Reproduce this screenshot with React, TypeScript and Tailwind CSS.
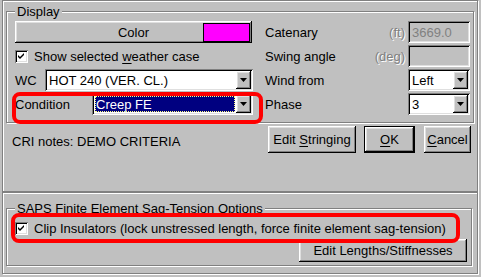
import React from "react";

const raised =
  "shadow-[inset_-1px_-1px_0_#000,inset_1px_1px_0_#fff,inset_-2px_-2px_0_#808080,inset_2px_2px_0_#dfdfdf]";
const sunken =
  "shadow-[inset_1px_1px_0_#808080,inset_-1px_-1px_0_#fff,inset_2px_2px_0_#000,inset_-2px_-2px_0_#dfdfdf]";
const etched = "border border-[#808080] shadow-[inset_1px_1px_0_#fff,1px_1px_0_#fff]";

function Check() {
  return (
    <div className={`w-[13px] h-[13px] shrink-0 bg-white ${sunken} flex items-center justify-center`}>
      <svg width="7" height="7" viewBox="0 0 7 7">
        <path d="M0 2 L2 4 L6 0 L6 2 L2 6 L0 4 Z" fill="#000" />
      </svg>
    </div>
  );
}

function Arrow() {
  return (
    <div className={`w-[15px] h-[18px] mr-[2px] shrink-0 bg-[#c0c0c0] ${raised} flex items-center justify-center`}>
      <svg width="7" height="4" viewBox="0 0 7 4">
        <path d="M0 0 H7 L3.5 4 Z" fill="#000" />
      </svg>
    </div>
  );
}

function Combo({ className, text, focus }: { className: string; text: string; focus?: boolean }) {
  return (
    <div className={`h-[22px] bg-white ${sunken} flex items-center ${className}`}>
      {focus ? (
        <div className="flex-1 h-[16px] ml-[3px] mr-[1px] bg-[#000080] text-white flex items-center pl-[1px] outline-1 outline-dotted outline-[#ffff80] -outline-offset-1">
          {text}
        </div>
      ) : (
        <div className="flex-1 pl-[4px]">{text}</div>
      )}
      <Arrow />
    </div>
  );
}

function Field({ text }: { text?: string }) {
  return (
    <div className={`w-[62px] h-[22px] ml-[3px] bg-[#c0c0c0] ${sunken} flex items-center pl-[4px] text-[#808080]`}>
      {text}
    </div>
  );
}

function Btn({ className, children }: { className: string; children: React.ReactNode }) {
  return (
    <div className={`bg-[#c0c0c0] ${raised} flex items-center justify-center ${className}`}>{children}</div>
  );
}

export default function App() {
  return (
    <div className="relative w-[481px] h-[277px] overflow-hidden bg-[#c0c0c0] pl-[2px] text-[13px] leading-[15px] text-black font-['Liberation_Sans',Arial,sans-serif]">
      {/* Frame A */}
      <div className={`w-[476px] h-[192px] ${etched} flex flex-col`}>
        {/* Display group */}
        <div className={`relative ml-[3px] mt-[10px] w-[468px] h-[112px] ${etched} pt-[9px] pl-[8px] flex`}>
          <span className="absolute left-[8px] top-[-8px] px-[2px] bg-[#c0c0c0]">Display</span>
          <div className="w-[238px] flex flex-col gap-[2px]">
            <Btn className="relative w-[237px] h-[22px]">
              <span>Color</span>
              <div className="absolute right-[2px] top-[2px] w-[47px] h-[19px] border border-[#000] bg-[#ff00ff]" />
            </Btn>
            <div className="h-[22px] flex items-center">
              <Check />
              <span className="ml-[6px]">
                Show selected <span className="underline underline-offset-[2px]">w</span>eather case
              </span>
            </div>
            <div className="h-[22px] flex items-center">
              <span>WC</span>
              <Combo className="ml-auto w-[208px]" text="HOT 240 (VER. CL.)" />
            </div>
            <div className="h-[22px] flex items-center">
              <span>Condition</span>
              <Combo className="ml-auto w-[161px]" text="Creep FE" focus />
            </div>
          </div>
          <div className="ml-[12px] w-[205px] flex flex-col gap-[2px]">
            <div className="h-[22px] flex items-center">
              <span className="flex-1">Catenary</span>
              <span className="text-[#808080] [text-shadow:1px_1px_0_#fff]">(ft)</span>
              <Field text="3669.0" />
            </div>
            <div className="h-[22px] flex items-center">
              <span className="flex-1">Swing angle</span>
              <span className="text-[#808080] [text-shadow:1px_1px_0_#fff]">(deg)</span>
              <Field />
            </div>
            <div className="h-[22px] flex items-center">
              <span className="flex-1">Wind from</span>
              <Combo className="w-[62px]" text="Left" />
            </div>
            <div className="h-[22px] flex items-center">
              <span className="flex-1">Phase</span>
              <Combo className="w-[62px]" text="3" />
            </div>
          </div>
        </div>
        {/* notes and buttons */}
        <div className="mt-[3px] h-[27px] flex items-center">
          <span className="ml-[9px] pt-[3px]">CRI notes: DEMO CRITERIA</span>
          <Btn className="ml-auto w-[88px] h-[27px]">
            <span>
              Edit <span className="underline underline-offset-[2px]">S</span>tringing
            </span>
          </Btn>
          <div className="ml-[8px] w-[51px] h-[27px] border border-black">
            <Btn className="w-full h-full">
              <span className="underline underline-offset-[2px]">O</span>K
            </Btn>
          </div>
          <Btn className="ml-[9px] mr-[6px] w-[47px] h-[27px]">
            <span>
              <span className="underline underline-offset-[2px]">C</span>ancel
            </span>
          </Btn>
        </div>
      </div>
      {/* Frame B */}
      <div className={`w-[476px] h-[82px] ${etched}`}>
        <div className={`relative ml-[3px] mt-[15px] w-[466px] h-[58px] ${etched} pt-[9px] pl-[8px] flex flex-col`}>
          <span className="absolute left-[8px] top-[-8px] px-[2px] bg-[#c0c0c0]">
            SAPS Finite Element Sag-Tension Options
          </span>
          <div className="h-[21px] flex items-center">
            <Check />
            <span className="ml-[6px]">Clip Insulators (lock unstressed length, force finite element sag-tension)</span>
          </div>
          <div className="flex justify-end pr-[4px]">
            <Btn className="w-[168px] h-[23px]">Edit Lengths/Stiffnesses</Btn>
          </div>
        </div>
      </div>
      {/* red annotations */}
      <div className="absolute left-[12px] top-[92px] w-[251px] h-[32px] border-[4px] border-[#ff0000] rounded-[8px]" />
      <div className="absolute left-[11px] top-[213px] w-[449px] h-[30px] border-[4px] border-[#ff0000] rounded-[8px]" />
    </div>
  );
}
